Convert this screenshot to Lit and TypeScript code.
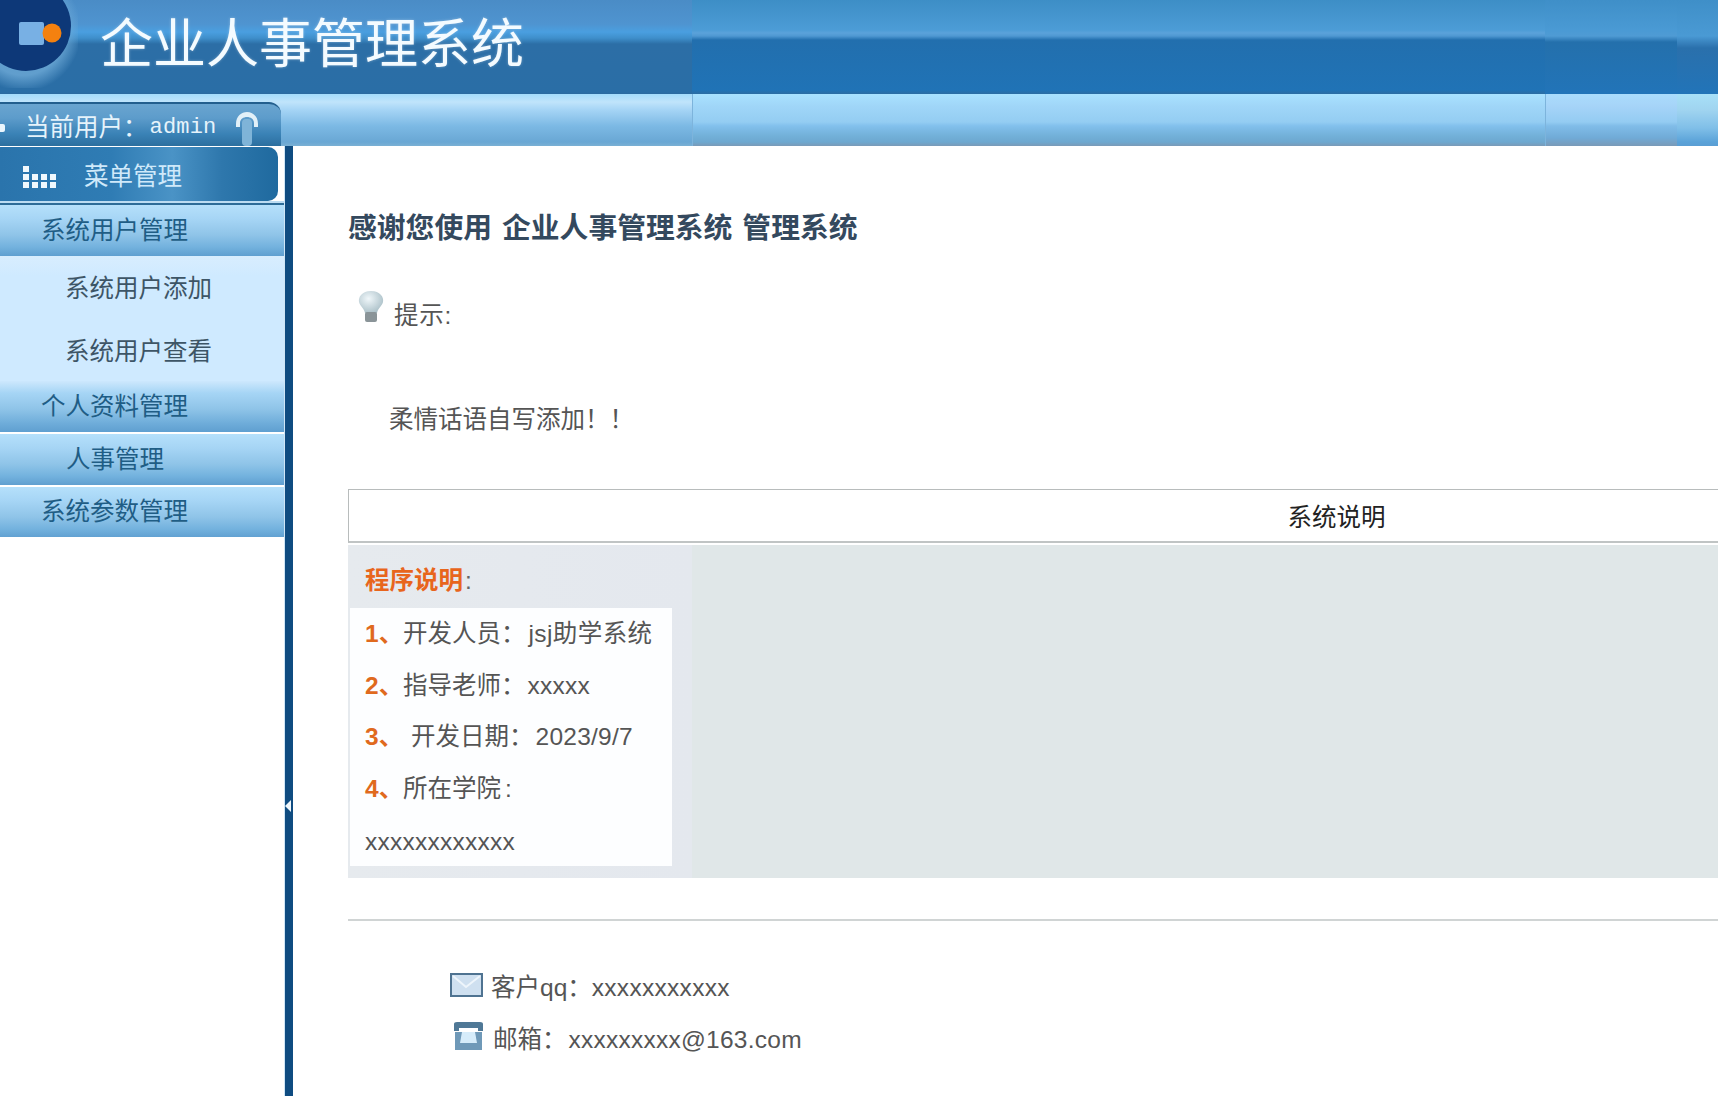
import { LitElement, html, css } from "lit";
import { customElement } from "lit/decorators.js";

@customElement("app-root")
export class AppRoot extends LitElement {
  static styles = css`
    :host { display: block; width: 1718px; height: 1096px; overflow: hidden; background: #fff; position: relative;
      font-family: "Liberation Sans", "Noto Sans CJK SC", sans-serif; font-size: 24.5px; color: #555; }
    * { box-sizing: border-box; }
    .header { display: grid; grid-template-columns: 692px 853px 132px 1fr; height: 94px; }
    .h-seg { background: linear-gradient(180deg, #3d8ec6 0, #4c9cd6 30px, #5ba2da 33px, #4f98d2 36px, #226fae 40px, #2073b6 90px, #2c6da3 94px); }
    .h-left { background: linear-gradient(180deg, #4a8cc6 0, #4f94d0 24px, #4a9fe0 32px, #3f8fcb 38px, #2c6ea6 44px, #2a6ea6 92px, #2c6a9f 94px);
      padding: 13px 0 0 100px; position: relative; }
    .h-b { background: linear-gradient(180deg, #3f8fc8 0, #4a9ad4 30px, #4f9bd4 36px, #2470ac 42px, #2274b8 92px); }
    .h-c { background: linear-gradient(180deg, #3f8fc8 0, #4a9ad4 36px, #3f8bc6 40px, #2a70ac 48px, #2274b8 92px); }
    .title { font-size: 53px; line-height: 64px; color: #f4fbff; white-space: nowrap; font-weight: 400; text-shadow: 0 0 3px rgba(255,255,255,.35); position: relative; }
    .logo { position: absolute; left: -24px; top: -24px; width: 100px; height: 100px; }
    .halo { position: absolute; left: 0; top: 0; width: 78px; height: 88px;
      background: radial-gradient(ellipse at 30% 35%, rgba(110,170,215,.8) 55%, rgba(110,170,215,0) 75%); }
    .subbar { display: grid; grid-template-columns: 692px 853px 132px 1fr; height: 52px; }
    .s-seg { border-left: 1px solid #7db4dc; background: linear-gradient(180deg, #a9e2ff 0, #a0d6f8 12px, #94cdf2 28px, #82c0ec 32px, #72b0d8 42px, #6da8d0 48px, #7a9ab8 52px); }
    .s-b { background: linear-gradient(180deg, #aadcfc 0, #a6d4f8 12px, #94ccf2 28px, #80bce8 32px, #70aad6 44px, #7a9ab8 52px); }
    .s-c { border-left: 0; background: linear-gradient(180deg, #a8e0f8 0, #a0d4f0 16px, #80bfe8 34px, #5aa2d8 48px, #5a9ed4 52px); }
    .s-left { background: linear-gradient(180deg, #a4dcfb 0, #c0e4fb 8px, #a5d4f5 16px, #7cb9e4 32px, #69a7d4 48px, #7ab0d4 52px); padding-top: 8px; }
    .user { width: 281px; height: 44px; border-radius: 0 12px 0 0; border-top: 2px solid #235f8e;
      background: linear-gradient(180deg, #6aa5d0 0, #5d9ccb 14px, #3a82b6 30px, #2c6f9f 42px);
      display: flex; align-items: center; padding: 6px 0 0 25px; color: #e6f3fb; position: relative; line-height: 36px; white-space: nowrap; }
    .user .mono { font-family: "Liberation Mono", monospace; font-size: 22px; margin-left: 2px; letter-spacing: .2px; }
    .user .dot { position: absolute; left: 0; top: 20px; width: 5px; height: 8px; background: #eaf6fd; border-radius: 0 2px 2px 0; }
    .user svg { position: absolute; left: 234px; top: 3px; }
    .main { display: grid; grid-template-columns: 285px 8px 1fr; height: 950px; }
    .side { display: flex; flex-direction: column; align-items: stretch; background: #fff; border-right: 1px solid #cfe6f7; }
    .menutitle { width: 278px; height: 54px; margin-top: 1px; border-radius: 0 10px 10px 0; display: flex; align-items: center; color: #cfe9fa;
      background: linear-gradient(90deg, #2a74ac 0, #2f7cb4 40%, #4a93c6 62%, #2e77ac 80%, #1f6a9f 100%); padding: 6px 0 0 23px; gap: 28px; line-height: 48px; }
    .menurule { height: 4px; border-bottom: 2px solid #2d6c98; background: #bcdcf2; }
    .item { height: 51px; display: flex; align-items: center; color: #1f5d85; line-height: 51px; padding-left: 41px;
      background: linear-gradient(180deg, #b5e0fb 0, #a6d5f5 14px, #8fc4e8 30px, #73b2de 42px, #5f9fd0 51px); }
    .item.sub { padding-left: 66px; margin-top: 2px; }
    .item.last { margin-top: 2px; height: 50px; line-height: 49px; padding-bottom: 2px; }
    .sublist { height: 125px; background: linear-gradient(180deg, #d8edfe 0, #cfeaff 20px, #cfeaff 100%); color: #3d5566; }
    .sublist div { height: 62px; line-height: 66px; padding-left: 65px; }
    .sublist .s2 { line-height: 68px; }
    .item.fade { background: linear-gradient(180deg, #cde8fd 0, #a6d5f5 12px, #8fc4e8 28px, #6fadda 42px, #5f9fd0 51px); }
    .stripe { background: #0f4c81; position: relative; }
    .stripe::after { content: ""; position: absolute; left: 0; top: 654px; border: 6px solid transparent; border-right-color: #eef6fb; border-left-width: 0; }
    .content { padding-left: 55px; overflow: hidden; }
    .heading { margin: 62px 0 0; font-size: 28.8px; line-height: 40px; font-weight: 700; color: #34495e; white-space: nowrap; word-spacing: 2px; }
    .tip { display: flex; margin: 47px 0 0; height: 40px; align-items: center; position: relative; padding: 0 0 4px 46px; }
    .tip svg { position: absolute; left: 7px; top: -6px; }
    .tip span { letter-spacing: .8px; }
    .soft { margin: 65px 0 0 41px; line-height: 40px; height: 40px; color: #555; }
    .table { margin-top: 49px; width: 1976px; }
    .thead { height: 54px; border-top: 1px solid #b8bcbc; border-bottom: 2px solid #c0c4c4; border-left: 1px solid #b8bcbc; text-align: center; color: #222; line-height: 55px; }
    .panel { margin-top: 2px; height: 333px; background: linear-gradient(90deg, #e6eaee 0, #e4e8ee 344px, #e0e7e8 344px, #e0e7e8 100%); padding-left: 2px; }
    .ptitle { height: 63px; line-height: 72px; padding-left: 15px; color: #666; }
    .ptitle b { color: #e8651c; font-weight: 700; }
    .ptitle span { margin-left: 2px; }
    .box { width: 322px; height: 258px; background: #fdfeff; }
    .row { height: 51.5px; line-height: 51.5px; display: flex; padding-left: 15px; white-space: nowrap; }
    .row.xs { line-height: 55px; letter-spacing: .25px; }
    .num { width: 38px; color: #e06a1e; font-weight: 700; }
    .val { margin-left: 2px; letter-spacing: .25px; }
    .v1 { margin-left: 3px; letter-spacing: .4px; }
    .in3 { margin-left: 8px; }
    .colon { margin-left: 4px; }
    .rule { margin-top: 41px; height: 2px; background: #d0d4d4; width: 1976px; }
    .contact { margin-top: 41px; padding-left: 102px; }
    .cline { height: 52px; display: flex; align-items: center; line-height: 52px; white-space: nowrap; position: relative; }
    .cline svg { flex: none; margin-right: 8px; }
    .up { margin-top: -6px; }
    .up2 { margin-top: -8px; margin-left: 2px; }
    .ls { letter-spacing: .3px; }
  `;

  render() {
    return html`
      <div class="header">
        <div class="h-left">
          <div class="halo"></div>
          <svg class="logo" viewBox="0 0 100 100">
            <circle cx="50" cy="50" r="45" fill="#0d3878"/>
            <rect x="43" y="46" width="25" height="23" rx="2" fill="#78b0e4"/>
            <circle cx="76" cy="57" r="9.5" fill="#f4810f"/>
          </svg>
          <div class="title">企业人事管理系统</div>
        </div>
        <div class="h-seg"></div>
        <div class="h-b"></div>
        <div class="h-c"></div>
      </div>
      <div class="subbar">
        <div class="s-left">
          <div class="user">
            <span class="dot"></span>
            <span>当前用户：</span><span class="mono">admin</span>
            <svg width="26" height="39" viewBox="0 0 26 39">
              <rect x="8" y="12" width="10" height="27" rx="4" fill="#7fb4d8"/>
              <path d="M2 17 C2 1 24 1 24 17 L24 20 L20 20 L20 16 C20 8 6 8 6 16 L6 20 L2 20 Z" fill="#e2f0f8"/>
            </svg>
          </div>
        </div>
        <div class="s-seg"></div>
        <div class="s-seg s-b"></div>
        <div class="s-seg s-c"></div>
      </div>
      <div class="main">
        <div class="side">
          <div class="menutitle">
            <svg width="33" height="22" viewBox="0 0 33 22" fill="#f0f8fd">
              <rect x="0" y="0" width="6" height="6"/><rect x="0" y="8" width="6" height="6"/><rect x="0" y="16" width="6" height="6"/>
              <rect x="9" y="8" width="6" height="6"/><rect x="9" y="16" width="6" height="6"/>
              <rect x="18" y="8" width="6" height="6"/><rect x="18" y="16" width="6" height="6"/>
              <rect x="27" y="8" width="6" height="6"/><rect x="27" y="16" width="6" height="6"/>
            </svg>
            <span>菜单管理</span>
          </div>
          <div class="menurule"></div>
          <div class="item">系统用户管理</div>
          <div class="sublist"><div>系统用户添加</div><div class="s2">系统用户查看</div></div>
          <div class="item fade">个人资料管理</div>
          <div class="item sub">人事管理</div>
          <div class="item last">系统参数管理</div>
        </div>
        <div class="stripe"></div>
        <div class="content">
          <h1 class="heading">感谢您使用 企业人事管理系统 管理系统</h1>
          <div class="tip">
            <svg width="32" height="36" viewBox="0 0 32 36">
              <defs><radialGradient id="b" cx=".4" cy=".35" r=".7"><stop offset="0" stop-color="#f0f7fa"/><stop offset="1" stop-color="#a8bec6"/></radialGradient></defs>
              <path d="M16 2 C7 2 3 8 4 13 C5 17 9 19 10 24 L22 24 C23 19 27 17 28 13 C29 8 25 2 16 2 Z" fill="url(#b)"/>
              <rect x="10" y="23" width="12" height="10" rx="2" fill="#8a9498"/>
            </svg>
            <span>提示:</span>
          </div>
          <div class="soft">柔情话语自写添加！！</div>
          <div class="table">
            <div class="thead">系统说明</div>
            <div class="panel">
              <div class="ptitle"><b>程序说明</b><span>:</span></div>
              <div class="box">
                <div class="row"><span class="num">1、</span><span>开发人员：</span><span class="val v1">jsj助学系统</span></div>
                <div class="row"><span class="num">2、</span><span>指导老师：</span><span class="val">xxxxx</span></div>
                <div class="row"><span class="num">3、</span><span class="in3">开发日期：</span><span class="val">2023/9/7</span></div>
                <div class="row"><span class="num">4、</span><span>所在学院</span><span class="colon">:</span></div>
                <div class="row xs"><span>xxxxxxxxxxxx</span></div>
              </div>
            </div>
          </div>
          <div class="rule"></div>
          <div class="contact">
            <div class="cline">
              <svg class="up" width="33" height="24" viewBox="0 0 33 24">
                <rect x="1" y="1" width="31" height="22" fill="#cfe0f0" stroke="#4f7391" stroke-width="2"/>
                <path d="M3 3 L16 14 L30 3" fill="none" stroke="#eef5fb" stroke-width="2"/>
              </svg>
              <span>客户qq：</span><span class="ls">xxxxxxxxxxx</span>
            </div>
            <div class="cline">
              <svg class="up2" width="33" height="29" viewBox="0 0 33 29">
                <path d="M2 2 Q2 0 5 0 H28 Q31 0 31 2 V9 H26 V6 H7 V9 H2 Z" fill="#4f7896"/>
                <path d="M3 10 H30 V28 H3 Z" fill="#6f99b8"/>
                <path d="M10 10 H23 L25 21 H8 Z" fill="#d6ecfa"/>
              </svg>
              <span>邮箱：</span><span class="val">xxxxxxxxx@163.com</span>
            </div>
          </div>
        </div>
      </div>
    `;
  }
}
